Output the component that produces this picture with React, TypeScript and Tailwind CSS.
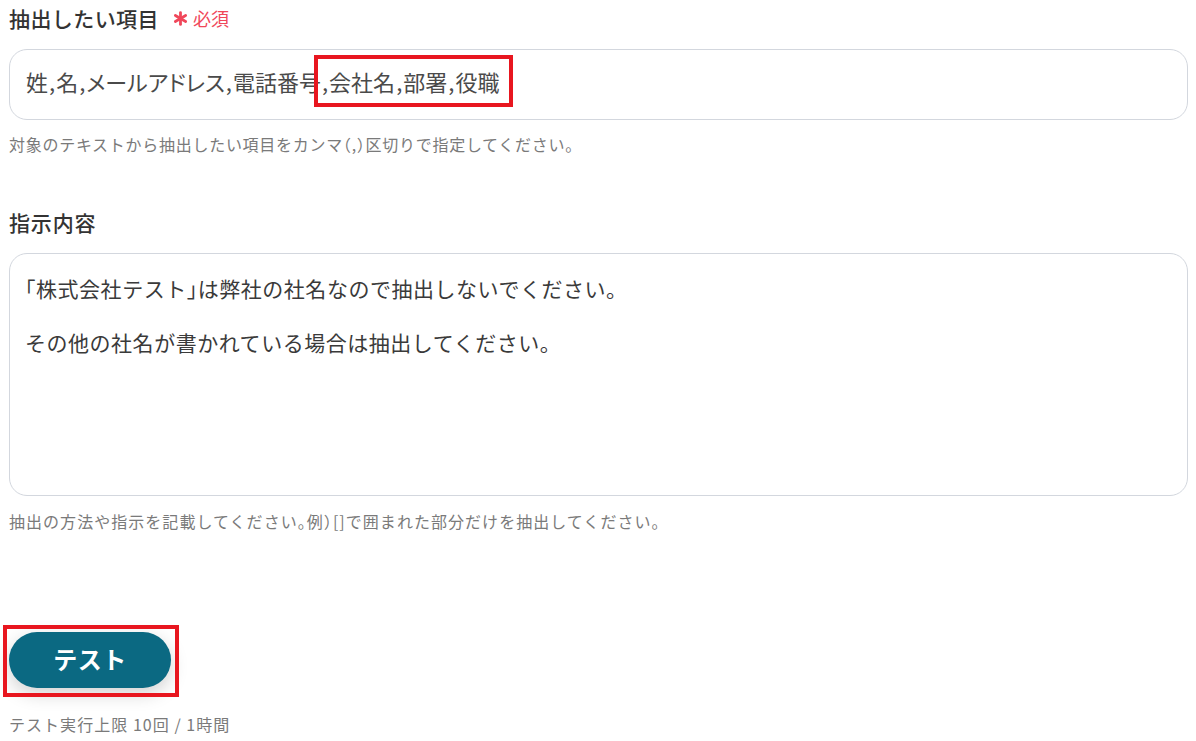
import React from "react";

const font = { fontFamily: '"Noto Sans CJK JP", "Noto Sans", sans-serif' };

function Asterisk() {
  return (
    <svg width="15" height="15" viewBox="0 0 14 14" className="inline-block">
      <g stroke="#f0475a" strokeWidth="2.6" strokeLinecap="round">
        <line x1="7" y1="1.5" x2="7" y2="12.5" />
        <line x1="2.2" y1="4.25" x2="11.8" y2="9.75" />
        <line x1="2.2" y1="9.75" x2="11.8" y2="4.25" />
      </g>
    </svg>
  );
}

function H({ children }: { children: React.ReactNode }) {
  return <span className="[font-feature-settings:'halt']">{children}</span>;
}

function C() {
  return <span className="mx-[1px]">,</span>;
}

export default function App() {
  return (
    <div className="w-[1196px] h-[741px] bg-white overflow-hidden relative pl-[9px] pr-[8px]" style={font}>
      {/* Label 1 */}
      <div className="flex items-center h-[28px] mt-[4px]">
        <span className="text-[21px] font-medium text-[#333333] tracking-[0.02em] leading-[28px]">抽出したい項目</span>
        <span className="ml-[14px] flex items-center gap-[5px] text-[18px] text-[#f0475a] leading-[28px]">
          <Asterisk />
          <span>必須</span>
        </span>
      </div>

      {/* Input */}
      <div className="mt-[17px] h-[71px] border border-[#d3d7de] rounded-[18px] flex items-center px-[16px] pb-[6px]">
        <span className="text-[22px] text-[#4a4a4a]">
          姓<C />名<C />
          <span className="[font-feature-settings:'palt']">メールアドレス</span>
          <C />電話番号<C />会社名<C />部署<C />役職
        </span>
      </div>

      {/* Helper 1 */}
      <div className="mt-[12px] h-[24px] text-[16px] text-[#7a7a7a] leading-[24px] tracking-[0.045em]">
        対象のテキストから抽出したい項目をカンマ<H>（</H>,<H>）</H>区切りで指定してください。
      </div>

      {/* Label 2 */}
      <div className="mt-[52px] h-[28px] text-[21px] font-medium text-[#333333] tracking-[0.04em] leading-[28px]">
        指示内容
      </div>

      {/* Textarea */}
      <div className="mt-[17px] h-[243px] border border-[#d3d7de] rounded-[18px] px-[15px] pt-[21px]">
        <div className="text-[21px] text-[#3a3a3a] leading-[27px] tracking-[0.025em]">
          <div>
            <H>「</H>株式会社テスト<H>」</H>は弊社の社名なので抽出しないでください。
          </div>
          <div>&nbsp;</div>
          <div>その他の社名が書かれている場合は抽出してください。</div>
        </div>
      </div>

      {/* Helper 2 */}
      <div className="mt-[13px] h-[24px] text-[16px] text-[#7a7a7a] leading-[24px] tracking-[0.065em]">
        抽出の方法や指示を記載してください<H>。</H>例<H>）</H>[]で囲まれた部分だけを抽出してください。
      </div>

      {/* Button */}
      <div className="mt-[99px]">
        <button className="w-[162px] h-[56px] rounded-full bg-[#0b6982] text-white text-[24px] font-bold tracking-[0.02em] shadow-[0_6px_18px_rgba(0,0,0,0.18)] flex items-center justify-center pb-[2px]">
          テスト
        </button>
      </div>

      {/* Footer */}
      <div className="mt-[24px] h-[24px] text-[16px] text-[#7a7a7a] leading-[24px] tracking-[0.065em]">
        テスト実行上限 10回 / 1時間
      </div>

      {/* Annotation overlays */}
      <div className="absolute left-[314px] top-[55px] w-[199px] h-[52px] border-[4px] border-[#e8161f] pointer-events-none" />
      <div className="absolute left-[3px] top-[625px] w-[176px] h-[72px] border-[4px] border-[#e8161f] pointer-events-none" />
    </div>
  );
}
